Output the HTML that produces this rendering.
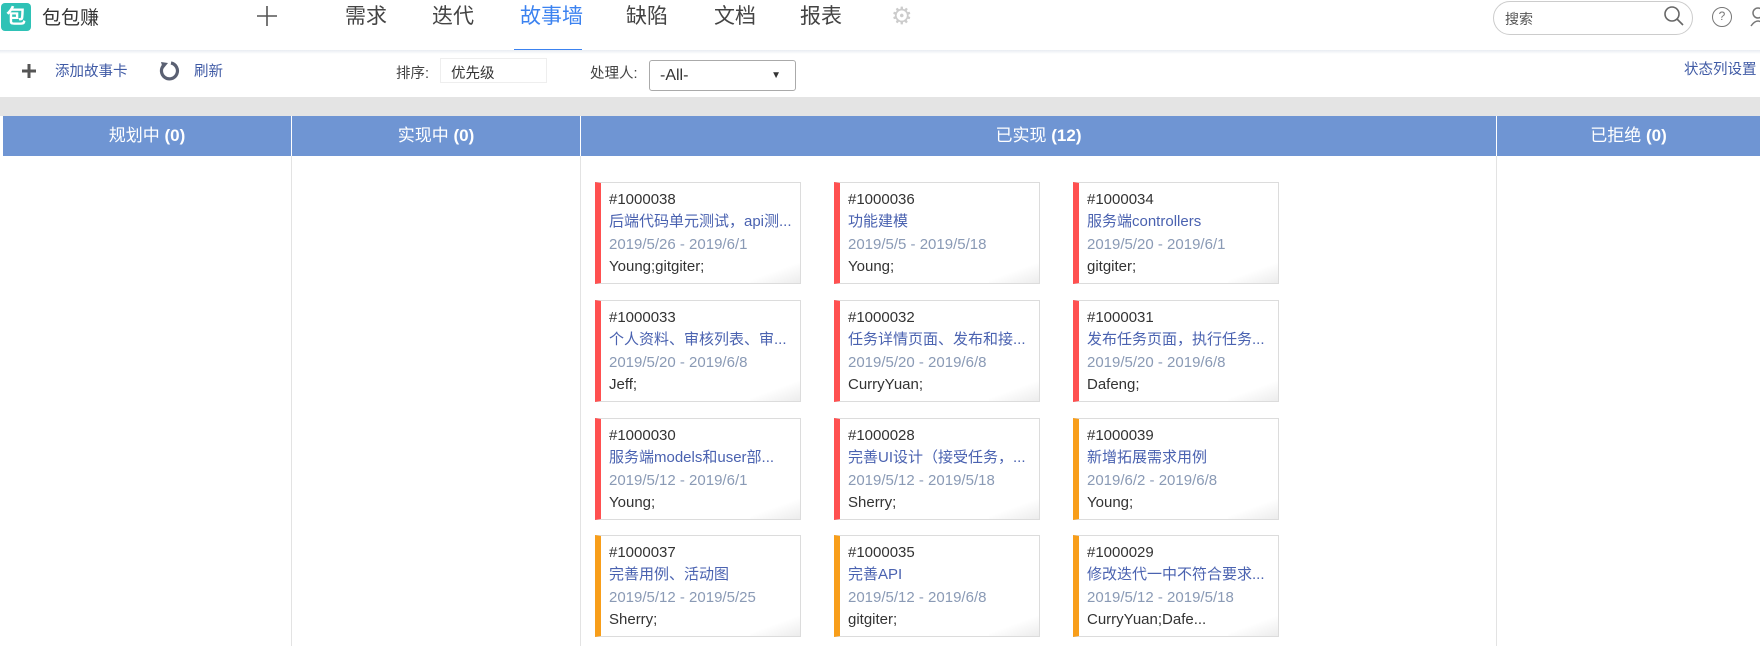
<!DOCTYPE html>
<html><head><meta charset="utf-8">
<style>
*{margin:0;padding:0;box-sizing:border-box}
body{width:1760px;height:646px;overflow:hidden;background:#fff;font-family:"Liberation Sans","Noto Sans CJK SC",sans-serif;position:relative;color:#333}
.a{position:absolute;white-space:nowrap}
.tab{position:absolute;top:3px;font-size:21px;color:#444;line-height:28px}
.hdr{position:absolute;top:116px;height:40px;background:#6f95d3;color:#fff;font-size:17px;line-height:40px;text-align:center}
.col{position:absolute;top:156px;height:490px;border-left:1px solid #e3e3e3}
.card{position:absolute;width:206px;height:102px;border:1px solid #dcdcdc;border-left:6px solid #ff5050;background:#fff;padding-left:8px;font-size:15px;overflow:hidden}
.card.o{border-left-color:#f89e1a}
.card div{position:absolute;left:8px;line-height:20px;white-space:nowrap}
.card .l1{top:7px;color:#333}
.card .l2{top:29px;color:#4a62b0}
.card .l3{top:52px;color:#8a9ab5}
.card .l4{top:74px;color:#333}
.card:after{content:"";position:absolute;right:0;bottom:0;width:50px;height:24px;background:linear-gradient(160deg,#fff 50%,#ececec 100%);border-top-left-radius:30px 14px}
.tb{position:absolute;top:63px;font-size:14.5px;line-height:18px;white-space:nowrap}
</style></head><body>
<div class="a" style="left:1px;top:3px;width:30px;height:28px;background:#2fc2b6;border-radius:4px;color:#fff;font-size:20px;font-weight:bold;line-height:28px;text-align:center">包</div>
<div class="a" style="left:42px;top:6px;font-size:19px;color:#333;line-height:26px">包包赚</div>
<svg class="a" style="left:256px;top:5px" width="22" height="22"><path d="M11 1V21M1 11H21" stroke="#555" stroke-width="1.6"/></svg>
<div class="tab" style="left:345px">需求</div>
<div class="tab" style="left:432px">迭代</div>
<div class="tab" style="left:520px;color:#3b82f0">故事墙</div>
<div class="tab" style="left:626px">缺陷</div>
<div class="tab" style="left:714px">文档</div>
<div class="tab" style="left:800px">报表</div>
<div class="a" style="left:514px;top:49px;width:68px;height:3px;background:#3b82f0"></div>
<div class="a" style="left:891px;top:2px;font-size:24px;color:#ccc">⚙</div>
<div class="a" style="left:1493px;top:1px;width:200px;height:34px;border:1px solid #ccc;border-radius:17px"></div>
<div class="a" style="left:1505px;top:9px;font-size:14px;color:#555">搜索</div>
<svg class="a" style="left:1662px;top:4px" width="24" height="24"><circle cx="10" cy="10" r="7" fill="none" stroke="#666" stroke-width="1.6"/><line x1="15" y1="15" x2="21" y2="21" stroke="#666" stroke-width="1.6"/></svg>
<div class="a" style="left:1712px;top:7px;width:20px;height:20px;border:1.5px solid #777;border-radius:50%;font-size:12px;line-height:17px;text-align:center;color:#777">?</div>
<svg class="a" style="left:1750px;top:6px" width="12" height="22"><circle cx="8" cy="7" r="5" fill="none" stroke="#777" stroke-width="1.5"/><path d="M1 20 Q8 10 15 20" fill="none" stroke="#777" stroke-width="1.5"/></svg>
<div class="a" style="left:0;top:50px;width:1760px;height:4px;background:linear-gradient(#e8ecf2,#fff)"></div>
<svg class="a" style="left:21px;top:63px" width="16" height="16"><path d="M8 1V15M1 8H15" stroke="#555" stroke-width="3"/></svg>
<div class="tb" style="left:55px;color:#3f5aa5">添加故事卡</div>
<svg class="a" style="left:158px;top:60px" width="22" height="22"><path d="M6 5 A8 8 0 1 0 13 3" fill="none" stroke="#5a6072" stroke-width="3.2"/><path d="M3 2 L10 3 L5 9Z" fill="#5a6072"/></svg>
<div class="tb" style="left:194px;color:#3f5aa5">刷新</div>
<div class="tb" style="left:396px;top:65px;color:#444">排序:</div>
<div class="a" style="left:440px;top:58px;width:107px;height:25px;border:1px solid #eee;font-size:14.5px;padding:3px 10px">优先级</div>
<div class="tb" style="left:590px;top:65px;color:#444">处理人:</div>
<div class="a" style="left:649px;top:60px;width:147px;height:31px;border:1px solid #aaa;border-radius:3px;font-size:16px;padding:6px 10px">-All-<span style="position:absolute;right:14px;top:9px;font-size:10px">▼</span></div>
<div class="tb" style="left:1684px;top:61px;color:#3f5aa5">状态列设置</div>
<div class="a" style="left:0;top:97px;width:1760px;height:19px;background:#e4e4e4"></div>
<div class="hdr" style="left:3px;width:288px">规划中 <b>(0)</b></div>
<div class="hdr" style="left:292px;width:288px">实现中 <b>(0)</b></div>
<div class="hdr" style="left:581px;width:915px">已实现 <b>(12)</b></div>
<div class="hdr" style="left:1497px;width:263px">已拒绝 <b>(0)</b></div>
<div class="col" style="left:291px"></div>
<div class="col" style="left:580px"></div>
<div class="col" style="left:1496px"></div>
<div class="card" style="left:595px;top:182px"><div class="l1">#1000038</div><div class="l2">后端代码单元测试，api测...</div><div class="l3">2019/5/26 - 2019/6/1</div><div class="l4">Young;gitgiter;</div></div>
<div class="card" style="left:834px;top:182px"><div class="l1">#1000036</div><div class="l2">功能建模</div><div class="l3">2019/5/5 - 2019/5/18</div><div class="l4">Young;</div></div>
<div class="card" style="left:1073px;top:182px"><div class="l1">#1000034</div><div class="l2">服务端controllers</div><div class="l3">2019/5/20 - 2019/6/1</div><div class="l4">gitgiter;</div></div>
<div class="card" style="left:595px;top:300px"><div class="l1">#1000033</div><div class="l2">个人资料、审核列表、审...</div><div class="l3">2019/5/20 - 2019/6/8</div><div class="l4">Jeff;</div></div>
<div class="card" style="left:834px;top:300px"><div class="l1">#1000032</div><div class="l2">任务详情页面、发布和接...</div><div class="l3">2019/5/20 - 2019/6/8</div><div class="l4">CurryYuan;</div></div>
<div class="card" style="left:1073px;top:300px"><div class="l1">#1000031</div><div class="l2">发布任务页面，执行任务...</div><div class="l3">2019/5/20 - 2019/6/8</div><div class="l4">Dafeng;</div></div>
<div class="card" style="left:595px;top:418px"><div class="l1">#1000030</div><div class="l2">服务端models和user部...</div><div class="l3">2019/5/12 - 2019/6/1</div><div class="l4">Young;</div></div>
<div class="card" style="left:834px;top:418px"><div class="l1">#1000028</div><div class="l2">完善UI设计（接受任务，...</div><div class="l3">2019/5/12 - 2019/5/18</div><div class="l4">Sherry;</div></div>
<div class="card o" style="left:1073px;top:418px"><div class="l1">#1000039</div><div class="l2">新增拓展需求用例</div><div class="l3">2019/6/2 - 2019/6/8</div><div class="l4">Young;</div></div>
<div class="card o" style="left:595px;top:535px"><div class="l1">#1000037</div><div class="l2">完善用例、活动图</div><div class="l3">2019/5/12 - 2019/5/25</div><div class="l4">Sherry;</div></div>
<div class="card o" style="left:834px;top:535px"><div class="l1">#1000035</div><div class="l2">完善API</div><div class="l3">2019/5/12 - 2019/6/8</div><div class="l4">gitgiter;</div></div>
<div class="card o" style="left:1073px;top:535px"><div class="l1">#1000029</div><div class="l2">修改迭代一中不符合要求...</div><div class="l3">2019/5/12 - 2019/5/18</div><div class="l4">CurryYuan;Dafe...</div></div>
</body></html>
